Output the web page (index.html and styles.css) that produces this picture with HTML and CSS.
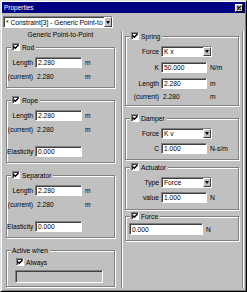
FILE: index.html
```html
<!DOCTYPE html>
<html lang="en">
<head>
  <meta charset="UTF-8">
  <title>Properties</title>
  <link rel="stylesheet" href="styles.css">
</head>
<body>

<div class="window">
  <div class="titlebar">
    <span class="title">Properties</span>
    <span class="close">
      <svg width="4" height="4" viewBox="0 0 4 4"><path d="M0 0L4 4M4 0L0 4" stroke="#000" stroke-width="1.2"/></svg>
    </span>
  </div>

  <div class="content">
    <!-- left column -->
    <div class="left">
      <div class="combo main-combo">
        <span class="combo-text">* Constraint[3] - Generic Point-to</span>
        <span class="drop"><span class="arrow"></span></span>
      </div>
      <div class="caption">Generic Point-to-Point</div>

      <div class="group lgroup rod">
        <div class="legend"><span class="check"><svg width="6" height="6" viewBox="0 0 6 6"><path d="M0.5 2.5L2.3 4.3L5.5 1" fill="none" stroke="#000" stroke-width="1.4"/></svg></span>Rod</div>
        <div class="row first"><span class="lbl">Length</span><span class="field">2.280</span><span class="unit">m</span></div>
        <div class="row near"><span class="lbl">(current)</span><span class="value">2.280</span><span class="unit">m</span></div>
      </div>

      <div class="group lgroup">
        <div class="legend"><span class="check"><svg width="6" height="6" viewBox="0 0 6 6"><path d="M0.5 2.5L2.3 4.3L5.5 1" fill="none" stroke="#000" stroke-width="1.4"/></svg></span>Rope</div>
        <div class="row first"><span class="lbl">Length</span><span class="field">2.280</span><span class="unit">m</span></div>
        <div class="row near"><span class="lbl">(current)</span><span class="value">2.280</span><span class="unit">m</span></div>
        <div class="row far"><span class="lbl">Elasticity</span><span class="field">0.000</span></div>
      </div>

      <div class="group lgroup">
        <div class="legend"><span class="check"><svg width="6" height="6" viewBox="0 0 6 6"><path d="M0.5 2.5L2.3 4.3L5.5 1" fill="none" stroke="#000" stroke-width="1.4"/></svg></span>Separator</div>
        <div class="row first"><span class="lbl">Length</span><span class="field">2.280</span><span class="unit">m</span></div>
        <div class="row near"><span class="lbl">(current)</span><span class="value">2.280</span><span class="unit">m</span></div>
        <div class="row far"><span class="lbl">Elasticity</span><span class="field">0.000</span></div>
      </div>

      <div class="group lgroup active">
        <div class="legend text-only">Active when</div>
        <div class="always"><span class="check"><svg width="6" height="6" viewBox="0 0 6 6"><path d="M0.5 2.5L2.3 4.3L5.5 1" fill="none" stroke="#000" stroke-width="1.4"/></svg></span>Always</div>
        <div class="cond"></div>
      </div>
    </div>

    <!-- right column -->
    <div class="right">
      <div class="group rgroup spring">
        <div class="legend"><span class="check"><svg width="6" height="6" viewBox="0 0 6 6"><path d="M0.5 2.5L2.3 4.3L5.5 1" fill="none" stroke="#000" stroke-width="1.4"/></svg></span>Spring</div>
        <div class="row first"><span class="lbl">Force</span><span class="combo"><span class="combo-text">K x</span><span class="drop"><span class="arrow"></span></span></span></div>
        <div class="row mid"><span class="lbl">K</span><span class="field">50.000</span><span class="unit">N/m</span></div>
        <div class="row mid"><span class="lbl">Length</span><span class="field">2.280</span><span class="unit">m</span></div>
        <div class="row tight"><span class="lbl">(current)</span><span class="value">2.280</span><span class="unit">m</span></div>
      </div>

      <div class="group rgroup damper">
        <div class="legend"><span class="check"><svg width="6" height="6" viewBox="0 0 6 6"><path d="M0.5 2.5L2.3 4.3L5.5 1" fill="none" stroke="#000" stroke-width="1.4"/></svg></span>Damper</div>
        <div class="row first"><span class="lbl">Force</span><span class="combo"><span class="combo-text">K v</span><span class="drop"><span class="arrow"></span></span></span></div>
        <div class="row short"><span class="lbl">C</span><span class="field">1.000</span><span class="unit">N-s/m</span></div>
      </div>

      <div class="group rgroup actuator">
        <div class="legend"><span class="check"><svg width="6" height="6" viewBox="0 0 6 6"><path d="M0.5 2.5L2.3 4.3L5.5 1" fill="none" stroke="#000" stroke-width="1.4"/></svg></span>Actuator</div>
        <div class="row first"><span class="lbl">Type</span><span class="combo"><span class="combo-text">Force</span><span class="drop"><span class="arrow"></span></span></span></div>
        <div class="row short"><span class="lbl">value</span><span class="field">1.000</span><span class="unit">N</span></div>
      </div>

      <div class="group rgroup force">
        <div class="legend"><span class="check"><svg width="6" height="6" viewBox="0 0 6 6"><path d="M0.5 2.5L2.3 4.3L5.5 1" fill="none" stroke="#000" stroke-width="1.4"/></svg></span>Force</div>
        <div class="row force-row"><span class="field wide">0.000</span><span class="unit">N</span></div>
      </div>
    </div>
  </div>
</div>

</body>
</html>
```

FILE: styles.css
```css
body {
  margin: 0;
  font-family: "Liberation Sans", Arial, sans-serif;
  font-size: 6.7px;
  color: #000;
  background: #c0c0c0;
}

.window {
  width: 247px;
  height: 292px;
  box-sizing: border-box;
  display: flex;
  flex-direction: column;
  background: #c0c0c0;
  border: 1px solid;
  border-color: #dfdfdf #000 #000 #dfdfdf;
  box-shadow: inset 1px 1px #fff, inset -1px -1px #808080;
  padding: 1px;
}

.titlebar {
  height: 11px;
  flex-shrink: 0;
  display: flex;
  align-items: center;
  justify-content: space-between;
  background: #000080;
  color: #fff;
  padding: 0 2px 0 2px;
}

.title {
  font-size: 6.5px;
}

.close {
  width: 8px;
  height: 8px;
  box-sizing: border-box;
  display: flex;
  align-items: center;
  justify-content: center;
  background: #c0c0c0;
  border: 1px solid;
  border-color: #fff #000 #000 #fff;
}

.content {
  flex: 1;
  display: flex;
  padding: 3px 2px 0 1px;
}

.left {
  width: 118px;
}

.right {
  flex: 1;
  margin: 15px 0 2px 0;
  border-left: 1px solid #808080;
  border-right: 1px solid #808080;
  box-shadow: inset 1px 0 #fff, 1px 0 #fff;
}

/* combo boxes and fields */

.combo {
  display: flex;
  width: 51px;
  height: 11px;
  box-sizing: border-box;
  background: #fff;
  border: 1px solid;
  border-color: #808080 #fff #fff #808080;
  box-shadow: inset 1px 1px #404040;
}

.main-combo {
  width: 110px;
  height: 12px;
}

.combo-text {
  flex: 1;
  overflow: hidden;
  white-space: nowrap;
  padding-left: 2px;
  display: flex;
  align-items: center;
}

.drop {
  width: 8px;
  box-sizing: border-box;
  display: flex;
  align-items: center;
  justify-content: center;
  background: #c0c0c0;
  border: 1px solid;
  border-color: #fff #404040 #404040 #fff;
}

.arrow {
  width: 0;
  height: 0;
  border-left: 2.5px solid transparent;
  border-right: 2.5px solid transparent;
  border-top: 3px solid #000;
}

.field {
  width: 46px;
  height: 11px;
  box-sizing: border-box;
  display: flex;
  align-items: center;
  background: #fff;
  border: 1px solid;
  border-color: #808080 #fff #fff #808080;
  box-shadow: inset 1px 1px #404040;
  padding-left: 2px;
}

.field.wide {
  width: 74px;
  height: 12px;
}

.value {
  width: 46px;
  box-sizing: border-box;
  padding-left: 2px;
}

.unit {
  margin-left: 3px;
}

.check {
  width: 8px;
  height: 8px;
  box-sizing: border-box;
  display: flex;
  align-items: center;
  justify-content: center;
  background: #fff;
  border: 1px solid;
  border-color: #808080 #fff #fff #808080;
  box-shadow: inset 1px 1px #404040;
}

.caption {
  margin: 3px 0 0 3px;
  width: 109px;
  height: 8px;
  line-height: 8px;
  text-align: center;
}

/* group boxes */

.group {
  box-sizing: border-box;
  border: 1px solid #808080;
  box-shadow: inset 1px 1px #fff, 1px 1px #fff;
}

.legend {
  display: flex;
  align-items: center;
  gap: 2px;
  width: max-content;
  height: 8px;
  margin: -5px 0 0 4px;
  padding: 0 2px 0 1px;
  background: #c0c0c0;
}

.row {
  display: flex;
  align-items: center;
  height: 11px;
}

.row.first { margin-top: 6px; }
.row.near { margin-top: 3px; }
.row.far { margin-top: 11px; }
.row.mid { margin-top: 5px; }
.row.tight { margin-top: 2px; }
.row.short { margin-top: 4px; }

.lgroup {
  width: 109px;
  margin: 12px 0 0 3px;
  padding-bottom: 5px;
}

.lgroup .lbl {
  width: 28px;
  box-sizing: border-box;
  padding-right: 2px;
  text-align: right;
}

.lgroup .field,
.lgroup .value {
  width: 47px;
}

.rod {
  margin-top: 8px;
}

.active {
  padding-bottom: 3px;
}

.always {
  display: flex;
  align-items: center;
  gap: 2px;
  margin: 4px 0 0 9px;
  height: 8px;
}

.cond {
  width: 88px;
  height: 13px;
  box-sizing: border-box;
  margin: 4px 0 0 8px;
  border: 1px solid;
  border-color: #808080 #fff #fff #808080;
  box-shadow: inset 1px 1px #404040;
}

.rgroup {
  width: 114px;
  margin: 12px 0 0 3px;
  padding-bottom: 5px;
}

.rgroup .lbl {
  width: 35px;
  box-sizing: border-box;
  padding-right: 2px;
  text-align: right;
}

.spring {
  margin-top: 5px;
  padding-bottom: 3px;
}

.actuator {
  margin-top: 7px;
  padding-bottom: 6px;
}

.force {
  margin-top: 6px;
}

.force-row {
  margin-top: 3px;
  height: 12px;
  padding-left: 3px;
}
```
